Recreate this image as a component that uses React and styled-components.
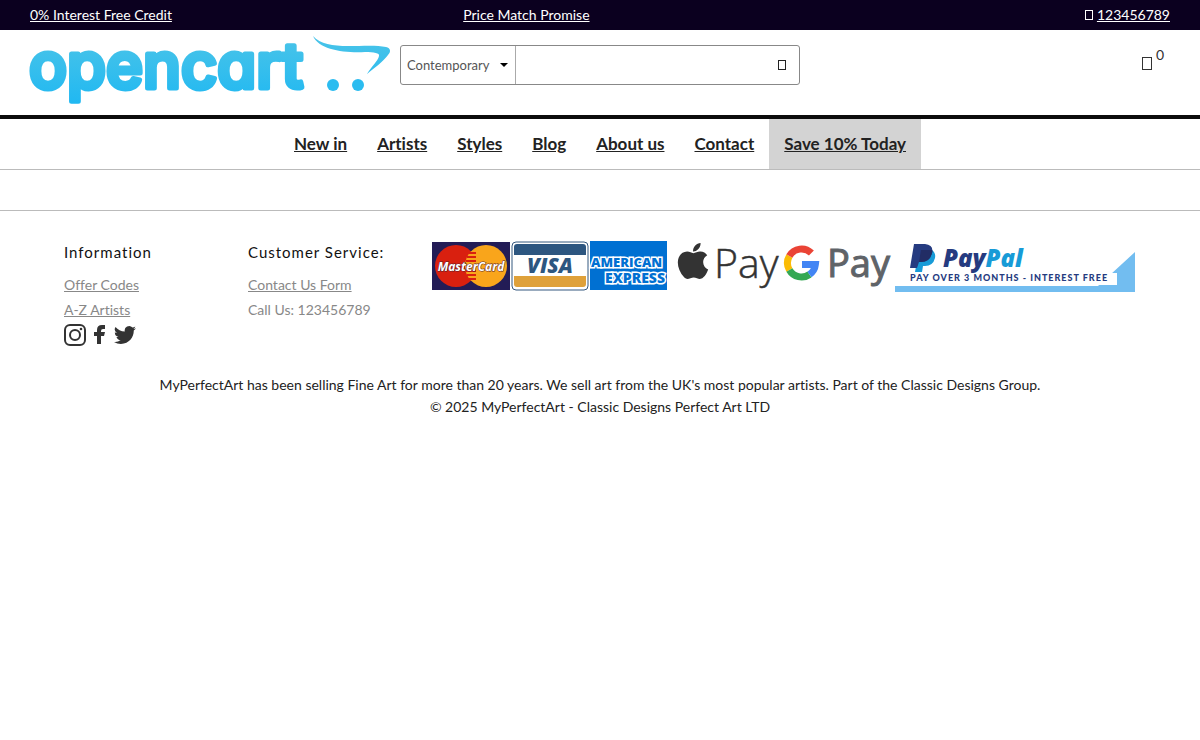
import React from 'react';
import styled, { createGlobalStyle } from 'styled-components';

const GlobalStyle = createGlobalStyle`
  *, *::before, *::after {
    box-sizing: border-box;
  }

  body {
    margin: 0;
    background: #fff;
    color: #222;
    font-family: Lato, sans-serif;
    font-size: 14px;
    font-variant-ligatures: no-common-ligatures;
    line-height: 22px;
  }
`

const TopBar = styled.div`
  display: grid;
  grid-template-columns: 38% 1fr auto;
  padding: 4px 30px;
  background: #0b001f;
  color: #fff;
`

const TopLink = styled.a`
  color: inherit;
`

const GlyphBox = styled.span`
  display: inline-block;
  width: ${props => (props.$large ? '10px' : '8px')};
  height: ${props => (props.$large ? '13px' : '10px')};
  border: 1px solid currentColor;
  vertical-align: baseline;
`

const Header = styled.header`
  display: flex;
  align-items: flex-start;
  gap: 10px;
  padding: 5px 30px 10px;
  border-bottom: 4px solid #0c0c0c;
`

const LogoLink = styled.a`
  display: block;
  height: 70px;
`

const SearchForm = styled.form`
  display: flex;
  flex: 0 1 400px;
  height: 40px;
  margin-top: 10px;
  border: 1px solid #888;
  border-radius: 3px;
`

const SelectBox = styled.div`
  position: relative;
  flex: none;
  width: 115px;
  border-right: 1px solid #aaa;

  &::after {
    content: '';
    position: absolute;
    top: 17px;
    right: 7px;
    border: 4px solid transparent;
    border-top-color: #000;
    border-bottom: 0;
    pointer-events: none;
  }
`

const CategorySelect = styled.select`
  width: 100%;
  height: 100%;
  padding: 0 6px;
  border: 0;
  background: transparent;
  color: #555;
  font: inherit;
  font-size: 13px;
  appearance: none;
`

const SearchInput = styled.input`
  flex: 1;
  min-width: 0;
  padding: 0 10px;
  border: 0;
  background: transparent;
  font: inherit;
`

const SearchButton = styled.button`
  display: flex;
  align-items: center;
  justify-content: center;
  width: 34px;
  padding: 0;
  border: 0;
  background: transparent;
  color: #222;
`

const CartLink = styled.a`
  display: flex;
  align-items: flex-start;
  gap: 4px;
  margin: 9px 6px 0 auto;
  color: #333;
  text-decoration: none;
`

const CartIcon = styled.span`
  display: flex;
  padding-top: 13px;
`

const Nav = styled.nav`
  display: flex;
  justify-content: center;
  border-bottom: 1px solid #bbb;
`

const NavLink = styled.a`
  padding: 14px 15px;
  background: ${props => (props.$active ? '#d3d3d3' : 'transparent')};
  color: #222;
  font-size: 17px;
  font-weight: 700;
`

const Main = styled.main`
  min-height: 40px;
`

const Footer = styled.footer`
  border-top: 1px solid #bbb;
`

const FooterTop = styled.div`
  display: flex;
  align-items: flex-start;
  justify-content: space-between;
  padding: 30px 65px 28px 64px;
`

const FooterColumn = styled.div`
  flex: 0 1 184px;
`

const FooterTitle = styled.h2`
  margin: 0 0 9px;
  color: #111;
  font-size: 15px;
  font-weight: 400;
  letter-spacing: 1px;
  line-height: 22px;
`

const FooterList = styled.ul`
  margin: 0;
  padding: 0;
  color: #888;
  line-height: 25px;
  list-style: none;
`

const FooterLink = styled.a`
  color: inherit;
`

const Social = styled.div`
  display: flex;
  gap: 3px;
  margin-top: 2px;
`

const SocialLink = styled.a`
  display: block;
  height: 22px;
`

const Payments = styled.div`
  display: flex;
  flex: none;
  margin-left: auto;
`

const LogoText = styled.text`
  font-family: ${props => props.$font || '"Open Sans"'}, sans-serif;
  font-size: ${props => props.$size}px;
  font-style: ${props => (props.$italic ? 'italic' : 'normal')};
  font-weight: ${props => props.$weight || 800};
  font-feature-settings: 'cv11';
`

const Copyright = styled.p`
  margin: 0;
  text-align: center;
`

const navItems = ['New in', 'Artists', 'Styles', 'Blog', 'About us', 'Contact', 'Save 10% Today'];

const Logo = () => (
  <svg width="360" height="70" viewBox="0 0 360 70" overflow="visible" role="img" aria-label="opencart">
    <defs>
      <linearGradient id="logoBlue" gradientUnits="userSpaceOnUse" x1="0" y1="0" x2="0" y2="70">
        <stop offset="0" stopColor="#4bc4e8" />
        <stop offset="1" stopColor="#1fb8f2" />
      </linearGradient>
    </defs>
    <LogoText
      x="-1"
      y="53"
      fill="url(#logoBlue)"
      stroke="url(#logoBlue)"
      strokeWidth="5"
      strokeLinejoin="round"
      $font="Inter"
      $size={63}
      $weight={500}
    >
      opencart
    </LogoText>
    <path
      fill="url(#logoBlue)"
      d="M283 1C290 9 303 11 318 11C333 11 347 10 356 12C361 13 361 17 358 20C353 27 344 33 337 39C341 32 348 26 349 21C350 18 344 17 335 17C314 18 289 15 283 1Z"
    />
    <circle cx="303" cy="50" r="6" fill="#2bbcf0" />
    <circle cx="328" cy="50" r="6" fill="#2bbcf0" />
  </svg>
)

const CardLogos = () => (
  <svg width="245" height="50" viewBox="0 0 245 50" role="img" aria-label="MasterCard, Visa, American Express">
    <rect x="0" y="1" width="78" height="48" fill="#231c56" />
    <circle cx="24" cy="25" r="21" fill="#d9200f" />
    <circle cx="54" cy="25" r="21" fill="#f9a51b" />
    <path
      stroke="#d9200f"
      strokeWidth="2"
      d="M37 12H44M35 16H44M34 20H44M34 30H44M35 34H44M37 38H44"
    />
    <LogoText x="39" y="30" textAnchor="middle" fill="#fff" stroke="#54202e" strokeWidth="1" paintOrder="stroke" $size={12} $weight={700} $italic>
      MasterCard
    </LogoText>
    <rect x="80" y="1" width="76" height="48" rx="4" fill="#fff" stroke="#34587f" />
    <path fill="#2d5680" d="M82 6Q82 3 85 3H151Q154 3 154 6V14H82Z" />
    <path fill="#dfa13a" d="M82 35H154V43Q154 46 151 46H85Q82 46 82 43Z" />
    <LogoText x="118" y="32" textAnchor="middle" fill="#2d5680" $size={21} $italic>
      VISA
    </LogoText>
    <rect x="158" y="0" width="77" height="49" fill="#0070d2" />
    <g fill="#0070d2" stroke="#fff" strokeWidth="3" paintOrder="stroke">
      <LogoText x="159" y="26" $size={13}>AMERICAN</LogoText>
      <LogoText x="173" y="42" $size={14}>EXPRESS</LogoText>
    </g>
  </svg>
)

const WalletLogos = () => (
  <svg width="218" height="50" viewBox="0 0 218 50" overflow="visible" role="img" aria-label="Apple Pay, Google Pay">
    <g transform="translate(-8 -4) scale(2)" fill="#333">
      <path d="M17.05 20.28c-.98.95-2.05.8-3.08.35-1.09-.46-2.09-.48-3.24 0-1.44.62-2.2.44-3.06-.35C2.79 15.25 3.51 7.59 9.05 7.31c1.35.07 2.29.74 3.08.8 1.18-.24 2.31-.93 3.57-.84 1.51.12 2.65.72 3.4 1.8-3.12 1.87-2.38 5.98.48 7.13-.57 1.5-1.31 2.99-2.54 4.09zM12.03 7.25c-.15-2.23 1.66-4.07 3.74-4.25.29 2.58-2.34 4.5-3.74 4.25z" />
    </g>
    <LogoText x="37" y="37" fill="#333" stroke="#333" strokeWidth="0.5" $size={41} $weight={300}>Pay</LogoText>
    <g fill="none" strokeWidth="7">
      <path stroke="#fbbc05" d="M112.4 29A14 14 0 0 1 112.4 15" />
      <path stroke="#ea4335" d="M112.4 15A14 14 0 0 1 134.4 12.1" />
      <path stroke="#34a853" d="M132.5 33.5A14 14 0 0 1 112.4 29" />
      <path stroke="#4285f4" d="M125 23.5H138.4A14 14 0 0 1 132.5 33.5" />
    </g>
    <LogoText x="150" y="36" fill="#5f6368" stroke="#5f6368" strokeWidth="1" $size={38} $weight={500}>Pay</LogoText>
  </svg>
)

const PayPalLogo = () => (
  <svg width="240" height="52" viewBox="0 0 240 52" role="img" aria-label="PayPal, pay over 3 months, interest free">
    <path fill="#72bdf0" d="M240 11V51H0V45H203Z" />
    <path fill="#179bd7" d="M24 9H37Q41 12 40 17Q38 25 30 25H28L27 31H20Z" />
    <path fill="#253b80" d="M19 3H30Q39 4 37 12Q35 21 26 21H24L22 27H15Z" />
    <path fill="#222d65" d="M26 9H37Q38 11 37 12Q35 21 26 21H24Z" />
    <LogoText x="48" y="26" fill="#253b80" $size={24} $italic>
      Pay<tspan fill="#179bd7">Pal</tspan>
    </LogoText>
    <rect x="15" y="32" width="207" height="12" fill="#fff" />
    <LogoText x="15" y="40" fill="#253b80" letterSpacing="1" $font="Lato" $size={9} $weight={900}>
      PAY OVER 3 MONTHS - INTEREST FREE
    </LogoText>
  </svg>
)

const Instagram = () => (
  <svg width="22" height="22" viewBox="0 0 22 22" aria-hidden="true">
    <rect x="1" y="1" width="20" height="20" rx="5" fill="none" stroke="#333" strokeWidth="2" />
    <circle cx="11" cy="11" r="5" fill="none" stroke="#333" strokeWidth="2" />
    <circle cx="17" cy="5" r="1.3" fill="#333" />
  </svg>
)

const Facebook = () => (
  <svg width="22" height="22" viewBox="0 0 22 22" aria-hidden="true">
    <path fill="#333" d="M8 20V12H5V8H8V6Q8 1 13 1H16V5H14Q12 5 12 7V8H16L15 12H12V20Z" />
  </svg>
)

const Twitter = () => (
  <svg width="22" height="22" viewBox="0 0 24 24" aria-hidden="true">
    <path fill="#333" d="M23.95 4.57a10 10 0 0 1-2.82.78 4.96 4.96 0 0 0 2.16-2.72c-.95.55-2 .96-3.13 1.18a4.92 4.92 0 0 0-8.38 4.48C7.69 8.1 4.07 6.13 1.64 3.16a4.92 4.92 0 0 0 1.52 6.57 4.9 4.9 0 0 1-2.23-.61v.06a4.92 4.92 0 0 0 3.95 4.83 5 5 0 0 1-2.21.08 4.94 4.94 0 0 0 4.6 3.42A9.87 9.87 0 0 1 0 19.54a13.99 13.99 0 0 0 7.55 2.21c9.05 0 14-7.5 14-13.98 0-.21 0-.42-.02-.63a9.94 9.94 0 0 0 2.42-2.57z" />
  </svg>
)

const App = () => (
  <>
    <GlobalStyle />
    <TopBar>
      <div><TopLink href="#credit">0% Interest Free Credit</TopLink></div>
      <div><TopLink href="#promise">Price Match Promise</TopLink></div>
      <div><GlyphBox /> <TopLink href="tel:123456789">123456789</TopLink></div>
    </TopBar>
    <Header>
      <LogoLink href="#home"><Logo /></LogoLink>
      <SearchForm role="search">
        <SelectBox>
          <CategorySelect aria-label="Category" defaultValue="Contemporary">
            <option>Contemporary</option>
          </CategorySelect>
        </SelectBox>
        <SearchInput type="text" aria-label="Search" />
        <SearchButton type="button" aria-label="Search"><GlyphBox /></SearchButton>
      </SearchForm>
      <CartLink href="#cart" aria-label="Cart">
        <CartIcon><GlyphBox $large /></CartIcon>
        <span>0</span>
      </CartLink>
    </Header>
    <Nav>
      {navItems.map((item, i) => (
        <NavLink key={item} href="#nav" $active={i === navItems.length - 1}>{item}</NavLink>
      ))}
    </Nav>
    <Main />
    <Footer>
      <FooterTop>
        <FooterColumn>
          <FooterTitle>Information</FooterTitle>
          <FooterList>
            <li><FooterLink href="#offers">Offer Codes</FooterLink></li>
            <li><FooterLink href="#artists">A-Z Artists</FooterLink></li>
          </FooterList>
          <Social>
            <SocialLink href="#instagram" aria-label="Instagram"><Instagram /></SocialLink>
            <SocialLink href="#facebook" aria-label="Facebook"><Facebook /></SocialLink>
            <SocialLink href="#twitter" aria-label="Twitter"><Twitter /></SocialLink>
          </Social>
        </FooterColumn>
        <FooterColumn>
          <FooterTitle>Customer Service:</FooterTitle>
          <FooterList>
            <li><FooterLink href="#contact">Contact Us Form</FooterLink></li>
            <li>Call Us: 123456789</li>
          </FooterList>
        </FooterColumn>
        <Payments>
          <CardLogos />
          <WalletLogos />
          <PayPalLogo />
        </Payments>
      </FooterTop>
      <Copyright>
        MyPerfectArt has been selling Fine Art for more than 20 years. We sell art from the UK's most popular artists. Part of the Classic Designs Group.
        <br />
        © 2025 MyPerfectArt - Classic Designs Perfect Art LTD
      </Copyright>
    </Footer>
  </>
)

export default App;
